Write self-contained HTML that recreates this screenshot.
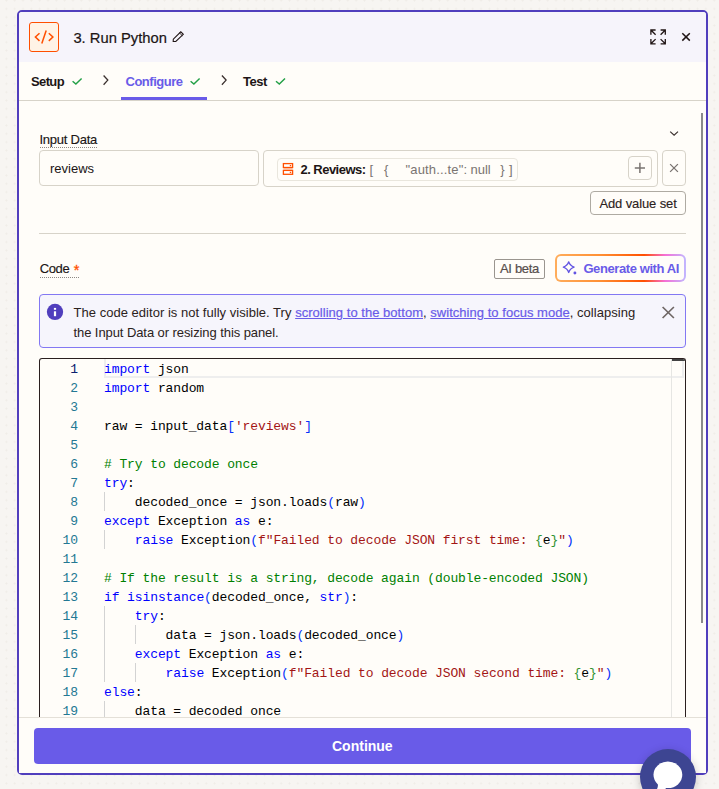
<!DOCTYPE html>
<html lang="en">
<head>
<meta charset="utf-8">
<title>3. Run Python</title>
<style>
*{box-sizing:border-box;margin:0;padding:0}
html,body{width:719px;height:789px;overflow:hidden}
body{position:relative;font-family:"Liberation Sans",sans-serif;font-size:13px;color:#201515;
 background-color:#f7f5f2;
 background-image:radial-gradient(circle,#efece7 0.8px,transparent 1.2px);
 background-size:8.33px 8.33px;background-position:2.2px 4.7px}
.abs{position:absolute}
.t{position:absolute;white-space:nowrap;line-height:1}
#panel{position:absolute;left:17px;top:10px;width:691px;height:765px;border:2px solid #503ebd;border-radius:5px;background:#fffdf9;overflow:hidden}
#hdr{position:absolute;left:0;top:0;width:687px;height:50px;background:#f6f4fb}
#tabline{position:absolute;left:0;top:88px;width:687px;height:1px;background:#d7d3c9}
#iconbox{position:absolute;left:29px;top:22px;width:30px;height:30px;border:1px solid #ff4f00;border-radius:3px;background:#fff3e6}
.bold{font-weight:bold}
.pv{top:163px;font-size:13px;color:#7a7471}
.lk{color:#695be8;text-decoration:underline;-webkit-text-stroke:0.2px #695be8}
/* code editor */
#editor{position:absolute;left:39px;top:358px;width:647px;height:359px;border:1px solid #2a1f1f;border-bottom:none;border-radius:3px 3px 0 0;background:#fffdf9;overflow:hidden}
.ln{position:absolute;left:0;width:38px;text-align:right;color:#237893;font-family:"Liberation Mono",monospace;font-size:13px;letter-spacing:-0.1px;line-height:19px;height:19px;white-space:pre}
.cl{position:absolute;left:64px;color:#000;font-family:"Liberation Mono",monospace;font-size:13px;letter-spacing:-0.104px;line-height:19px;height:19px;white-space:pre}
.k{color:#0000ff}.s{color:#a31515}.c{color:#008000}.b1{color:#0431fa}.b2{color:#319331}
.ln.act{color:#0b216f}
.guide{position:absolute;width:1px;background:#d3d3d3}
</style>
</head>
<body>
<div id="panel">
  <div id="hdr"></div>
  <div id="tabline"></div>
</div>

<div class="abs" style="left:701px;top:113px;width:2px;height:510px;background:#8a8a8a"></div>
<!-- header -->
<div id="iconbox"></div>
<div class="t" id="title" style="left:73.4px;top:31px;font-size:14.75px;font-weight:normal;-webkit-text-stroke:0.2px #201515">3. Run Python</div>

<!-- tabs -->
<div class="t bold" id="tab1" style="left:31px;top:75px;font-size:13px;letter-spacing:-0.62px">Setup</div>
<div class="t bold" id="tab2" style="left:125.5px;top:75px;font-size:13px;color:#695be8;letter-spacing:-0.49px">Configure</div>
<div class="t bold" id="tab3" style="left:243px;top:75px;font-size:13px;letter-spacing:-0.44px">Test</div>
<div class="abs" style="left:121px;top:97px;width:86px;height:3px;background:#695be8"></div>

<!-- input data -->
<div class="t" id="lblInput" style="-webkit-text-stroke:0.15px #201515;left:39.5px;top:132.5px;font-size:13px;letter-spacing:-0.25px">Input Data</div>
<div class="abs" style="left:40px;top:147px;width:57px;height:0;border-top:1px dotted #8d8884"></div>
<div class="abs" style="left:39px;top:150px;width:220px;height:36px;border:1px solid #d7d3c9;border-radius:4px"></div>
<div class="t" id="reviews" style="left:50px;top:162px;font-size:13px">reviews</div>
<div class="abs" style="left:263px;top:150px;width:395px;height:37px;border:1px solid #d7d3c9;border-radius:4px"></div>
<div class="abs" style="left:276.5px;top:158px;width:241px;height:23px;border:1px solid #e9e6dd;border-radius:4px"></div>
<div class="t bold" id="pillb" style="left:300.5px;top:163px;font-size:13px;letter-spacing:-0.53px">2. Reviews:</div>
<div class="t pv" id="pv1" style="left:369.5px">[</div>
<div class="t pv" id="pv2" style="left:384px">{</div>
<div class="t pv" id="pv3" style="left:405.5px;letter-spacing:0.16px">"auth...te":</div>
<div class="t pv" id="pv4" style="left:470.5px">null</div>
<div class="t pv" id="pv5" style="left:500.3px">}</div>
<div class="t pv" id="pv6" style="left:509px">]</div>
<div class="abs" style="left:628px;top:156px;width:24px;height:24px;border:1px solid #d7d3c9;border-radius:4px"></div>
<div class="abs" style="left:662px;top:150px;width:24px;height:36px;border:1px solid #d7d3c9;border-radius:4px"></div>
<div class="abs" style="left:590px;top:191px;width:96px;height:24px;border:1px solid #aeaaa2;border-radius:4px"></div>
<div class="t" id="addvs" style="color:#2b2120;-webkit-text-stroke:0.12px #2b2120;left:599.4px;top:197px;font-size:13px;letter-spacing:-0.11px">Add value set</div>
<div class="abs" style="left:39px;top:233px;width:647px;height:1px;background:#d7d3c9"></div>

<!-- code label row -->
<div class="t" id="lblCode" style="-webkit-text-stroke:0.15px #201515;left:39.8px;top:262px;font-size:13px;letter-spacing:-0.4px">Code</div>
<div class="t" id="star" style="left:73.7px;top:262.5px;font-size:14.5px;-webkit-text-stroke:0.3px #ff4f00;color:#ff4f00">*</div>
<div class="abs" style="left:40px;top:277px;width:39px;height:0;border-top:1px dotted #8d8884"></div>
<div class="abs" style="left:494px;top:259px;width:51px;height:20px;border:1px solid #9a958f;border-radius:2px"></div>
<div class="t" id="aibeta" style="left:500px;top:262.4px;font-size:13px;color:#574e4c;letter-spacing:-0.32px;-webkit-text-stroke:0.2px #574e4c">AI beta</div>
<div class="abs" style="left:555px;top:254px;width:131px;height:28px;border-radius:6px;background:linear-gradient(90deg,#ffad5c 0%,#ff8f33 35%,#ff6a14 55%,#ff4f00 68%,#f56fd6 84%,#c1b7ff 100%)"></div>
<div class="abs" style="left:557px;top:256px;width:127px;height:24px;border-radius:4px;background:#fffdf9"></div>
<div class="t bold" id="genai" style="left:583.4px;top:262px;font-size:13px;color:#695be8;letter-spacing:-0.41px">Generate with AI</div>

<!-- banner -->
<div class="abs" style="left:39px;top:294px;width:647px;height:54px;border:1px solid #8378f3;border-radius:4px;background:#f6f5fc"></div>
<div class="t" id="ban1" style="left:73.5px;top:306px;font-size:13px;color:#2b2220;letter-spacing:0.03px">The code editor is not fully visible. Try <span class="lk" id="lk1">scrolling to the bottom</span>, <span class="lk" id="lk2">switching to focus mode</span>, collapsing</div>
<div class="t" id="ban2" style="left:73.5px;top:326px;font-size:13px;color:#2b2220;letter-spacing:-0.08px">the Input Data or resizing this panel.</div>

<!-- editor -->
<div id="editor">
<div class="abs" style="left:64px;top:-2px;width:580px;height:21px;border:2px solid #eeeeee"></div>
<div class="abs" style="left:631px;top:0;width:1px;height:360px;background:#e6e6e3"></div>
<div class="abs" style="left:632px;top:0;width:14px;height:2px;background:#424242"></div>
<div class="ln act" style="top:1px">1</div>
<div class="cl" id="c1" style="top:1px"><span class="k">import</span> json</div>
<div class="ln" style="top:20px">2</div>
<div class="cl" id="c2" style="top:20px"><span class="k">import</span> random</div>
<div class="ln" style="top:39px">3</div>
<div class="ln" style="top:58px">4</div>
<div class="cl" id="c4" style="top:58px">raw = input_data<span class="b1">[</span><span class="s">'reviews'</span><span class="b1">]</span></div>
<div class="ln" style="top:77px">5</div>
<div class="ln" style="top:96px">6</div>
<div class="cl" id="c6" style="top:96px"><span class="c"># Try to decode once</span></div>
<div class="ln" style="top:115px">7</div>
<div class="cl" id="c7" style="top:115px"><span class="k">try</span>:</div>
<div class="ln" style="top:134px">8</div>
<div class="cl" id="c8" style="top:134px">    decoded_once = json.loads<span class="b1">(</span>raw<span class="b1">)</span></div>
<div class="guide" style="left:64.0px;top:133px;height:19px"></div>
<div class="ln" style="top:153px">9</div>
<div class="cl" id="c9" style="top:153px"><span class="k">except</span> Exception <span class="k">as</span> e:</div>
<div class="ln" style="top:172px">10</div>
<div class="cl" id="c10" style="top:172px">    <span class="k">raise</span> Exception<span class="b1">(</span><span class="s">f"Failed to decode JSON first time: </span><span class="b2">{</span>e<span class="b2">}</span><span class="s">"</span><span class="b1">)</span></div>
<div class="guide" style="left:64.0px;top:171px;height:19px"></div>
<div class="ln" style="top:191px">11</div>
<div class="ln" style="top:210px">12</div>
<div class="cl" id="c12" style="top:210px"><span class="c"># If the result is a string, decode again (double-encoded JSON)</span></div>
<div class="ln" style="top:229px">13</div>
<div class="cl" id="c13" style="top:229px"><span class="k">if</span> <span class="k">isinstance</span><span class="b1">(</span>decoded_once, <span class="k">str</span><span class="b1">)</span>:</div>
<div class="ln" style="top:248px">14</div>
<div class="cl" id="c14" style="top:248px">    <span class="k">try</span>:</div>
<div class="guide" style="left:64.0px;top:247px;height:19px"></div>
<div class="ln" style="top:267px">15</div>
<div class="cl" id="c15" style="top:267px">        data = json.loads<span class="b1">(</span>decoded_once<span class="b1">)</span></div>
<div class="guide" style="left:64.0px;top:266px;height:19px"></div>
<div class="guide" style="left:94.8px;top:266px;height:19px"></div>
<div class="ln" style="top:286px">16</div>
<div class="cl" id="c16" style="top:286px">    <span class="k">except</span> Exception <span class="k">as</span> e:</div>
<div class="guide" style="left:64.0px;top:285px;height:19px"></div>
<div class="ln" style="top:305px">17</div>
<div class="cl" id="c17" style="top:305px">        <span class="k">raise</span> Exception<span class="b1">(</span><span class="s">f"Failed to decode JSON second time: </span><span class="b2">{</span>e<span class="b2">}</span><span class="s">"</span><span class="b1">)</span></div>
<div class="guide" style="left:64.0px;top:304px;height:19px"></div>
<div class="guide" style="left:94.8px;top:304px;height:19px"></div>
<div class="ln" style="top:324px">18</div>
<div class="cl" id="c18" style="top:324px"><span class="k">else</span>:</div>
<div class="ln" style="top:343px">19</div>
<div class="cl" id="c19" style="top:343px">    data = decoded once</div>
<div class="guide" style="left:64.0px;top:342px;height:19px"></div>
</div>

<!-- footer -->
<div class="abs" style="left:19px;top:717px;width:687px;height:56px;background:#fffdf9;border-top:1px solid #e4e0d8"></div>
<div class="abs" style="left:34px;top:728px;width:657px;height:36px;border-radius:4px;background:#695be8"></div>
<div class="t bold" id="cont" style="left:332px;top:739px;font-size:14px;color:#fff">Continue</div>

<!-- chat bubble -->
<div class="abs" style="left:640px;top:749px;width:56px;height:56px;border-radius:50%;background:#3d4592;box-shadow:0 2px 10px rgba(0,0,0,.2)"></div>

<!-- icon overlay -->
<svg class="abs" id="icons" style="left:0;top:0;pointer-events:none" width="719" height="789" viewBox="0 0 719 789" fill="none" stroke-linecap="round" stroke-linejoin="round">
  <!-- code icon -->
  <g stroke="#ff4f00" stroke-width="1.5" stroke-linecap="butt" stroke-linejoin="miter">
    <path d="M39.5 33.2 L35.4 37 L39.5 40.9"/>
    <path d="M46.2 30.4 L41.8 43.5"/>
    <path d="M48.8 33.2 L52.9 37 L48.8 40.9"/>
  </g>
  <!-- pencil -->
  <g stroke="#201515" stroke-width="1.1" stroke-linejoin="miter">
    <path d="M173.2 41.5 L173.3 39.2 L180.8 31.8 L183.3 34.3 L175.8 41.5 Z"/>
    <path d="M179.6 33 L182.1 35.5" stroke-width="0.9"/>
  </g>
  <!-- expand -->
  <g stroke="#201515" stroke-width="1.3" stroke-linecap="butt" stroke-linejoin="miter">
    <path d="M655.6 30 H650.9 V34.7 M650.9 30 L655.6 34.7"/>
    <path d="M660.6 30 H665.3 V34.7 M665.3 30 L660.6 34.7"/>
    <path d="M655.6 43.8 H650.9 V39.1 M650.9 43.8 L655.6 39.1"/>
    <path d="M660.6 43.8 H665.3 V39.1 M665.3 43.8 L660.6 39.1"/>
  </g>
  <!-- close -->
  <path d="M682.3 33.2 L689.8 40.6 M689.8 33.2 L682.3 40.6" stroke="#201515" stroke-width="1.5" stroke-linecap="butt"/>
  <!-- tab checks -->
  <g stroke="#23a047" stroke-width="1.45" stroke-linecap="butt" stroke-linejoin="miter">
    <path d="M72.6 81.2 L75.9 84.1 L81.6 78.4"/>
    <path d="M190.6 81.2 L193.9 84.1 L199.6 78.4"/>
    <path d="M276 81.2 L279.3 84.1 L285 78.4"/>
  </g>
  <!-- tab chevrons -->
  <g stroke="#3a302e" stroke-width="1.3" stroke-linecap="butt" stroke-linejoin="miter">
    <path d="M103.6 75.5 L107.8 80.1 L103.6 84.7"/>
    <path d="M221.9 75.5 L226.1 80.1 L221.9 84.7"/>
  </g>
  <!-- collapse chevron -->
  <path d="M670.2 131.6 L674.1 135.2 L678 131.6" stroke="#3a302e" stroke-width="1.2" stroke-linecap="butt" stroke-linejoin="miter"/>
  <!-- storage icon -->
  <g stroke="#ff4f00" stroke-width="1.3" stroke-linejoin="miter">
    <rect x="283.4" y="163.6" width="9.2" height="3.9" fill="#fff"/>
    <rect x="283.4" y="170.4" width="9.2" height="3.9" fill="#fff"/>
    <path d="M289.8 165.55 H291.2 M289.8 172.35 H291.2" stroke-width="1.2" stroke-linecap="butt"/>
  </g>
  <rect x="283.4" y="168.1" width="9.2" height="1.7" fill="#ffb48f"/>
  <!-- plus -->
  <path d="M634.8 167.9 H645 M639.9 162.8 V173" stroke="#7a7471" stroke-width="1.5" stroke-linecap="butt"/>
  <!-- row x -->
  <path d="M670.1 164.1 L677.9 171.9 M677.9 164.1 L670.1 171.9" stroke="#7a7471" stroke-width="1.3" stroke-linecap="butt"/>
  <!-- sparkle -->
  <path d="M568.7 261.8 Q570 265.8 574.1 267.15 Q570 268.5 568.7 272.5 Q567.4 268.5 563.3 267.15 Q567.4 265.8 568.7 261.8 Z" stroke="#6254e2" stroke-width="1.3" stroke-linejoin="round"/>
  <circle cx="574.9" cy="273" r="1.45" fill="#6254e2"/>
  <!-- info icon -->
  <circle cx="55" cy="311.9" r="8.15" fill="#503ebd"/>
  <rect x="53.9" y="311.3" width="2.2" height="4.9" fill="#fff"/>
  <rect x="53.9" y="307.9" width="2.2" height="1.9" fill="#fff"/>
  <!-- banner close -->
  <path d="M662.6 307 L673.9 318 M673.9 307 L662.6 318" stroke="#6f6765" stroke-width="1.7" stroke-linecap="butt"/>
  <!-- chat bubble glyph -->
  <ellipse cx="667.9" cy="774.8" rx="14.4" ry="13.3" fill="#fff"/>
  <path d="M657.6 782.5 Q658.6 786 656.8 789.5 L666 789 L664 786 Z" fill="#fff"/>
</svg>
</body>
</html>
